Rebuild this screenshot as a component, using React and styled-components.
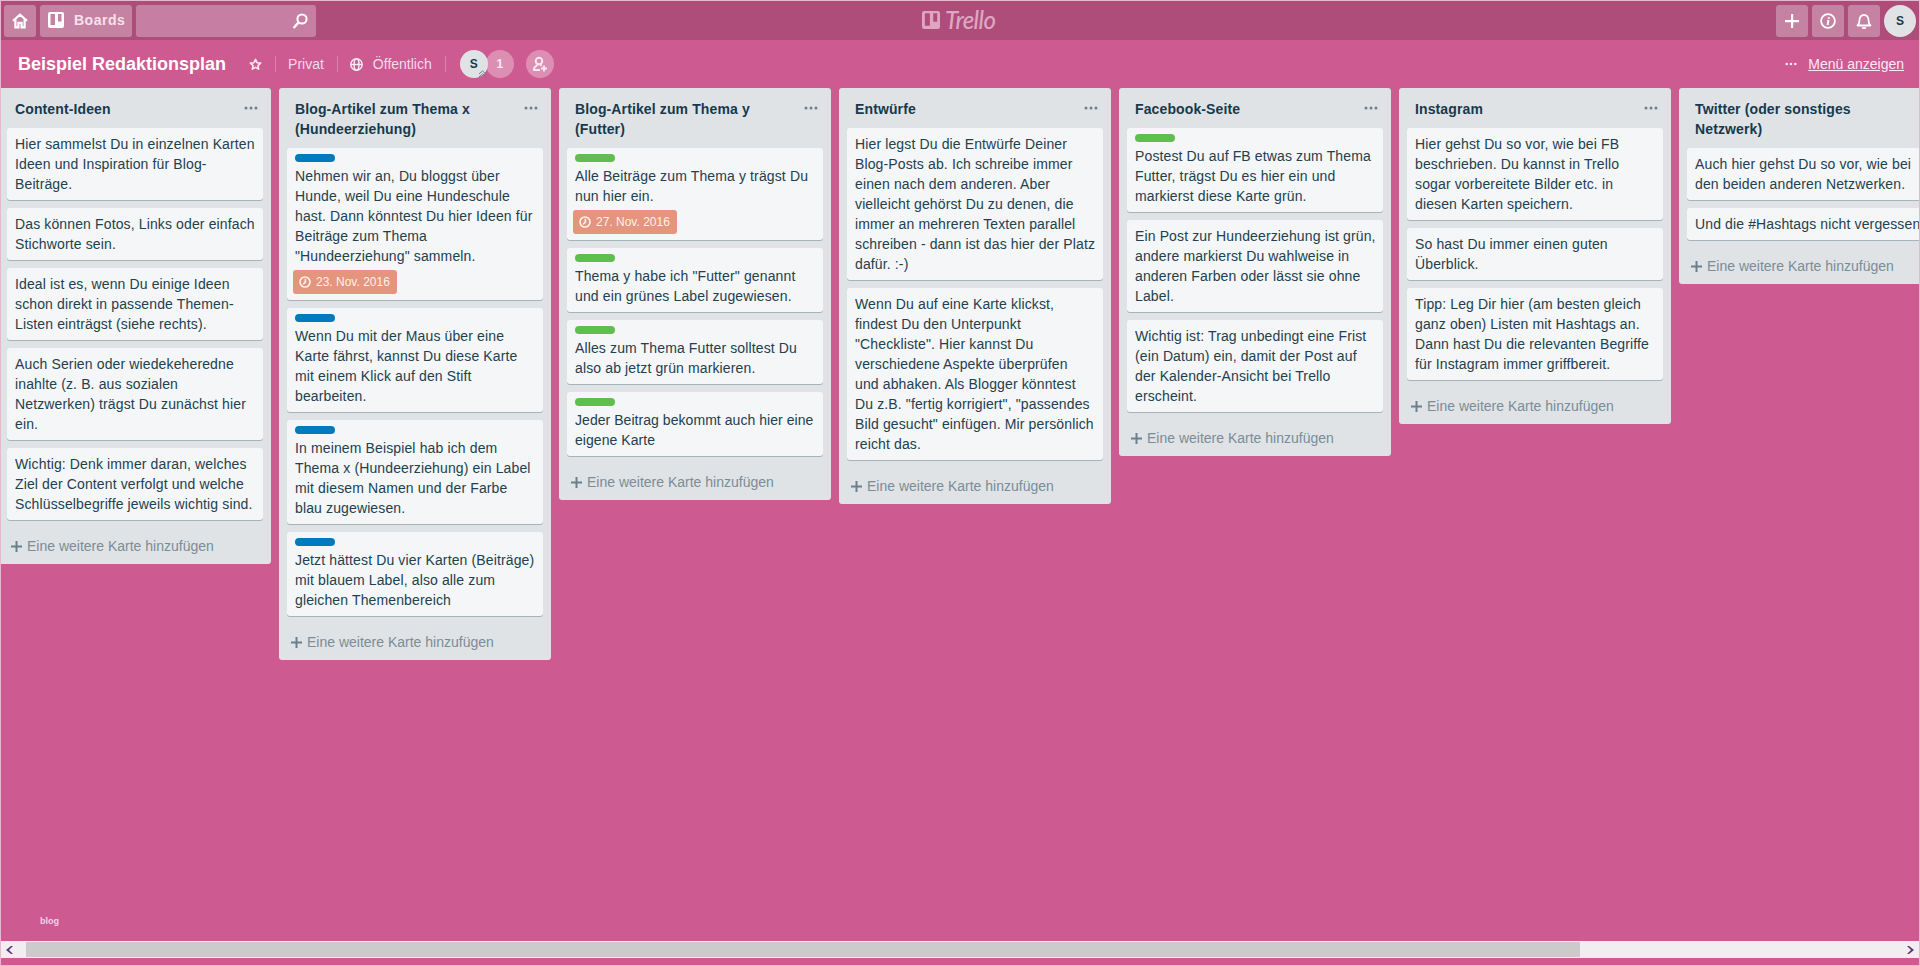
import React from 'react'
import styled, { createGlobalStyle } from 'styled-components'

const Global = createGlobalStyle`
  html, body { margin: 0; padding: 0; height: 100%; overflow: hidden; }
  body { font-family: "Liberation Sans", Arial, sans-serif; font-size: 14px; line-height: 20px; color: #17394d; }
`

const Frame = styled.div`
  box-sizing: border-box;
  width: 1920px;
  height: 966px;
  border: 1px solid #e6b9cf;
  background: #cd5a91;
  display: flex;
  flex-direction: column;
  overflow: hidden;
`

const TopBar = styled.header`
  box-sizing: border-box;
  height: 39px;
  flex: none;
  margin: 0 -1px;
  padding: 3px 4px 3px;
  background: #ae4d7a;
  display: flex;
  align-items: center;
  gap: 4px;
  position: relative;
`

const BarButton = styled.div`
  box-sizing: border-box;
  width: ${props => props.width || 32}px;
  height: 32px;
  flex: none;
  border-radius: 3px;
  background: rgba(255, 255, 255, 0.3);
  color: #fff;
  display: flex;
  align-items: center;
  justify-content: ${props => props.left ? 'flex-start' : 'center'};
  padding-left: ${props => props.left ? 8 : 0}px;
  padding-bottom: ${props => props.left ? 1 : 0}px;
  gap: 10px;
  font-weight: 700;
  font-size: 14px;
`

const BoardsLabel = styled.span`
  color: #f6e3ec;
  letter-spacing: 0.5px;
`

const SearchBox = styled(BarButton)`
  width: 180px;
  justify-content: flex-end;
  padding-right: 8px;
  background: #c67fa3;
`

const Logo = styled.div`
  position: absolute;
  left: 922px;
  top: 3px;
  height: 32px;
  display: flex;
  align-items: center;
  gap: 5px;
  color: #dfa6c4;
`

const LogoText = styled.span`
  font-family: Lato, sans-serif;
  font-style: italic;
  font-weight: 500;
  font-size: 24px;
  letter-spacing: -0.6px;
`

const Spacer = styled.div`
  flex: 1;
`

const TopAvatar = styled.div`
  width: 32px;
  height: 32px;
  flex: none;
  border-radius: 50%;
  background: #dfe3e6;
  color: #17394d;
  font-size: 12px;
  font-weight: 700;
  display: flex;
  align-items: center;
  justify-content: center;
`

const BoardBar = styled.div`
  box-sizing: border-box;
  height: 48px;
  flex: none;
  padding-left: 17px;
  padding-right: 15px;
  display: flex;
  align-items: center;
  color: #fff;
`

const BoardTitle = styled.h1`
  margin: 0 23px 0 0;
  font-size: 18px;
  line-height: 24px;
  font-weight: 700;
  color: #fff;
`

const BarIcon = styled.span`
  display: flex;
  flex: none;
  color: #fbe9f1;
`

const Sep = styled.span`
  width: 1px;
  height: 16px;
  flex: none;
  margin: 0 ${props => props.after || 12}px 0 ${props => props.before || 13}px;
  background: rgba(255, 255, 255, 0.25);
`

const BarText = styled.span`
  color: #f5dbe7;
  font-size: 14px;
  margin-left: ${props => props.gap || 0}px;
`

const Members = styled.div`
  display: flex;
  align-items: center;
  margin-left: 2px;
`

const Avatar = styled(TopAvatar)`
  width: 28px;
  height: 28px;
  position: relative;
  z-index: 1;
`

const Chevrons = styled.svg`
  position: absolute;
  right: 1px;
  bottom: 0;
`

const Count = styled.div`
  width: 28px;
  height: 28px;
  margin-left: -2px;
  border-radius: 50%;
  background: #dc8fb3;
  color: #fbeaf2;
  font-size: 12px;
  font-weight: 700;
  display: flex;
  align-items: center;
  justify-content: center;
`

const AddMember = styled(Count)`
  margin-left: 12px;
`

const MenuLink = styled.a`
  margin-left: 11px;
  color: #fbe9f1;
  text-decoration: underline;
  font-size: 14px;
`

const Canvas = styled.div`
  flex: 1;
  min-height: 0;
  display: flex;
  flex-direction: column;
`

const Lists = styled.main`
  flex: 1;
  min-height: 0;
  display: flex;
  align-items: flex-start;
  gap: 8px;
  margin-left: -2px;
`

const List = styled.section`
  box-sizing: border-box;
  width: 272px;
  flex: none;
  background: #dfe3e6;
  border-radius: 3px;
  padding: 0 8px;
`

const ListHead = styled.div`
  position: relative;
  padding: 11px 32px 9px 8px;
`

const ListTitle = styled.h2`
  margin: 0;
  font-size: 14px;
  line-height: 20px;
  font-weight: 700;
  letter-spacing: 0.12px;
  color: #17394d;
`

const ListDots = styled.div`
  position: absolute;
  right: 5px;
  top: 18px;
  display: flex;
  color: #6b808c;
`

const Card = styled.article`
  background: #f5f6f7;
  border-radius: 3px;
  box-shadow: 0 1px 0 #a9b3ba;
  padding: 6px 7px 6px 8px;
  margin-bottom: 8px;
  color: #22414f;
  letter-spacing: ${props => props.$spacing ?? 0.13}px;
`

const Label = styled.div`
  width: 40px;
  height: 8px;
  border-radius: 4px;
  margin-bottom: 4px;
  background: ${props => props.color};
`

const Due = styled.div`
  box-sizing: border-box;
  width: ${props => props.width || 104}px;
  height: 24px;
  margin: 4px 0 0 -2px;
  padding-left: 6px;
  border-radius: 3px;
  background: #e5947d;
  color: #fdf1ec;
  font-size: 12px;
  letter-spacing: 0;
  display: flex;
  align-items: center;
  gap: 5px;
`

const Composer = styled.div`
  height: 36px;
  margin: 0 -8px;
  padding-left: 12px;
  display: flex;
  align-items: center;
  gap: 5px;
  color: #7a8c97;
  font-size: 14px;
`

const PlusMark = styled.svg`
  color: #6b808c;
`

const BlogRow = styled.div`
  flex: none;
  height: 25px;
  padding: 1px 0 0 39px;
  color: #f4d5e3;
  font-size: 9px;
  line-height: 10px;
  font-weight: 700;
`

const ScrollBar = styled.div`
  flex: none;
  height: 17px;
  margin-bottom: 7px;
  background: #f0eef0;
  display: flex;
  align-items: center;
`

const ScrollEnd = styled.div`
  width: ${props => props.width}px;
  flex: ${props => props.grow ? 1 : 'none'};
  height: 15px;
  display: flex;
  align-items: center;
  justify-content: ${props => props.grow ? 'flex-end' : 'flex-start'};
  padding: 0 4px;
  box-sizing: border-box;
  color: #5f3370;
`

const ScrollThumb = styled.div`
  width: 1554px;
  height: 15px;
  flex: none;
  background: #cbcbcb;
`

const HomeIcon = () => (
  <svg width="16" height="16" viewBox="0 0 16 16" fill="none" stroke="currentColor" strokeWidth="2.2">
    <path d="M1 7.800 8 1.600l7 6.200M3.400 6v8.400h3V9.800h3.200v4.600h3V6" />
  </svg>
)

const BoardsIcon = ({ size = 16 }) => (
  <svg width={size} height={size} viewBox="0 0 16 16">
    <path fill="currentColor" fillRule="evenodd" d="M2 0h12a2 2 0 0 1 2 2v12a2 2 0 0 1-2 2H2a2 2 0 0 1-2-2V2a2 2 0 0 1 2-2zm.5 2v11h4.500V2zm7.500 0v7.500h3.500V2z" />
  </svg>
)

const SearchIcon = () => (
  <svg width="16" height="16" viewBox="0 0 16 16" fill="none" stroke="currentColor" strokeWidth="2">
    <circle cx="10" cy="6" r="4.600" />
    <path d="M6.600 9.400 1.600 15" strokeWidth="2.400" />
  </svg>
)

const PlusIcon = () => (
  <svg width="18" height="18" viewBox="0 0 18 18" fill="currentColor">
    <path d="M8 2h2.200v6H16v2.200h-5.800V16H8v-5.800H2V8h6z" />
  </svg>
)

const InfoIcon = () => (
  <svg width="16" height="16" viewBox="0 0 16 16" fill="none" stroke="currentColor" strokeWidth="1.800">
    <circle cx="8" cy="8" r="6.900" />
    <path d="M8.800 4.200v1.600M8.400 7 7.600 12" strokeWidth="2" />
  </svg>
)

const BellIcon = () => (
  <svg width="16" height="16" viewBox="0 0 16 16" fill="none" stroke="currentColor" strokeWidth="1.800">
    <path d="M1.500 12.500c1.600-1.400 2-2.800 2-5.500C3.500 4 5.400 2 8 2s4.500 2 4.500 5c0 2.700.4 4.100 2 5.500z" strokeLinejoin="round" />
    <path d="M6.200 14.400c.5 1 3.100 1 3.600 0" />
  </svg>
)

const StarIcon = () => (
  <svg width="13" height="13" viewBox="0 0 16 16" fill="none" stroke="currentColor" strokeWidth="2" strokeLinejoin="round">
    <path d="m8 1.800 1.900 4 4.400.5-3.300 3 .9 4.400L8 11.500l-3.900 2.200.9-4.400-3.300-3 4.400-.5z" />
  </svg>
)

const GlobeIcon = () => (
  <svg width="13" height="13" viewBox="0 0 16 16" fill="none" stroke="currentColor" strokeWidth="1.800">
    <circle cx="8" cy="8" r="7" />
    <ellipse cx="8" cy="8" rx="3" ry="7" />
    <path d="M1 8h14" />
  </svg>
)

const AddMemberIcon = () => (
  <svg width="16" height="16" viewBox="0 0 16 16" fill="none" stroke="currentColor" strokeWidth="1.900">
    <circle cx="7" cy="5" r="3.300" />
    <path d="M5.500 8.500C5 10 2 10.500 2 13v1h6M8.500 8.500l1 1.500" />
    <path d="M12 9.500v6M9 12.500h6" />
  </svg>
)

const ClockIcon = () => (
  <svg width="12" height="12" viewBox="0 0 16 16" fill="none" stroke="currentColor" strokeWidth="2.200">
    <circle cx="8" cy="8" r="6.700" />
    <path d="M8.500 3.800V8.300L5.500 11" />
  </svg>
)

const Dots = ({ width = 14 }) => (
  <svg width={width} height="4" viewBox="0 0 14 4" fill="currentColor">
    <circle cx="2" cy="2" r="1.500" />
    <circle cx="7" cy="2" r="1.500" />
    <circle cx="12" cy="2" r="1.500" />
  </svg>
)

const BLUE = '#0079bf'
const GREEN = '#61bd4f'

const LISTS = [
  {
    title: 'Content-Ideen',
    cards: [
      { text: 'Hier sammelst Du in einzelnen Karten Ideen und Inspiration für Blog-Beiträge.' },
      { text: 'Das können Fotos, Links oder einfach Stichworte sein.' },
      { text: 'Ideal ist es, wenn Du einige Ideen schon direkt in passende Themen-Listen einträgst (siehe rechts).' },
      { text: 'Auch Serien oder wiedekeheredne inahlte (z. B. aus sozialen Netzwerken) trägst Du zunächst hier ein.' },
      { text: 'Wichtig: Denk immer daran, welches Ziel der Content verfolgt und welche Schlüsselbegriffe jeweils wichtig sind.' },
    ],
  },
  {
    title: 'Blog-Artikel zum Thema x (Hundeerziehung)',
    cards: [
      { label: BLUE, text: 'Nehmen wir an, Du bloggst über Hunde, weil Du eine Hundeschule hast. Dann könntest Du hier Ideen für Beiträge zum Thema "Hundeerziehung" sammeln.', due: '23. Nov. 2016' },
      { label: BLUE, text: 'Wenn Du mit der Maus über eine Karte fährst, kannst Du diese Karte mit einem Klick auf den Stift bearbeiten.' },
      { label: BLUE, text: 'In meinem Beispiel hab ich dem Thema x (Hundeerziehung) ein Label mit diesem Namen und der Farbe blau zugewiesen.' },
      { label: BLUE, text: 'Jetzt hättest Du vier Karten (Beiträge) mit blauem Label, also alle zum gleichen Themenbereich' },
    ],
  },
  {
    title: 'Blog-Artikel zum Thema y (Futter)',
    cards: [
      { label: GREEN, text: 'Alle Beiträge zum Thema y trägst Du nun hier ein.', due: '27. Nov. 2016' },
      { label: GREEN, text: 'Thema y habe ich "Futter" genannt und ein grünes Label zugewiesen.' },
      { label: GREEN, text: 'Alles zum Thema Futter solltest Du also ab jetzt grün markieren.' },
      { label: GREEN, spacing: 0.05, text: 'Jeder Beitrag bekommt auch hier eine eigene Karte' },
    ],
  },
  {
    title: 'Entwürfe',
    cards: [
      { text: 'Hier legst Du die Entwürfe Deiner Blog-Posts ab. Ich schreibe immer einen nach dem anderen. Aber vielleicht gehörst Du zu denen, die immer an mehreren Texten parallel schreiben - dann ist das hier der Platz dafür. :-)' },
      // nbsp keeps "und abhaken" together, the line breaks there in the screenshot
      { text: 'Wenn Du auf eine Karte klickst, findest Du den Unterpunkt "Checkliste". Hier kannst Du verschiedene Aspekte überprüfen und\u00a0abhaken. Als Blogger könntest Du z.B. "fertig korrigiert", "passendes Bild gesucht" einfügen. Mir persönlich reicht das.' },
    ],
  },
  {
    title: 'Facebook-Seite',
    cards: [
      { label: GREEN, text: 'Postest Du auf FB etwas zum Thema Futter, trägst Du es hier ein und markierst diese Karte grün.' },
      { text: 'Ein Post zur Hundeerziehung ist grün, andere markierst Du wahlweise in anderen Farben oder lässt sie ohne Label.' },
      { text: 'Wichtig ist: Trag unbedingt eine Frist (ein Datum) ein, damit der Post auf der Kalender-Ansicht bei Trello erscheint.' },
    ],
  },
  {
    title: 'Instagram',
    cards: [
      { text: 'Hier gehst Du so vor, wie bei FB beschrieben. Du kannst in Trello sogar vorbereitete Bilder etc. in diesen Karten speichern.' },
      { text: 'So hast Du immer einen guten Überblick.' },
      { text: 'Tipp: Leg Dir hier (am besten gleich ganz oben) Listen mit Hashtags an. Dann hast Du die relevanten Begriffe für Instagram immer griffbereit.' },
    ],
  },
  {
    title: 'Twitter (oder sonstiges Netzwerk)',
    cards: [
      { text: 'Auch hier gehst Du so vor, wie bei den beiden anderen Netzwerken.' },
      { text: 'Und die #Hashtags nicht vergessen' },
    ],
  },
]

export default function App() {
  return (
    <Frame>
      <Global />
      <TopBar>
        <BarButton><HomeIcon /></BarButton>
        <BarButton width={92} left><BoardsIcon /><BoardsLabel>Boards</BoardsLabel></BarButton>
        <SearchBox><SearchIcon /></SearchBox>
        <Logo>
          <BoardsIcon size={18} />
          <LogoText>Trello</LogoText>
        </Logo>
        <Spacer />
        <BarButton><PlusIcon /></BarButton>
        <BarButton><InfoIcon /></BarButton>
        <BarButton><BellIcon /></BarButton>
        <TopAvatar>S</TopAvatar>
      </TopBar>

      <BoardBar>
        <BoardTitle>Beispiel Redaktionsplan</BoardTitle>
        <BarIcon><StarIcon /></BarIcon>
        <Sep />
        <BarText>Privat</BarText>
        <Sep />
        <BarIcon><GlobeIcon /></BarIcon>
        <BarText gap={10}>Öffentlich</BarText>
        <Sep />
        <Members>
          <Avatar>
            S
            <Chevrons width="9" height="8" viewBox="0 0 9 8" fill="none" stroke="#6b808c" strokeWidth="1">
              <path d="M1 4l3.500-3L8 4M1 7l3.500-3L8 7" />
            </Chevrons>
          </Avatar>
          <Count>1</Count>
          <AddMember><AddMemberIcon /></AddMember>
        </Members>
        <Spacer />
        <BarIcon><Dots width={12} /></BarIcon>
        <MenuLink>Menü anzeigen</MenuLink>
      </BoardBar>

      <Canvas>
        <Lists>
          {LISTS.map(list => (
            <List key={list.title}>
              <ListHead>
                <ListTitle>{list.title}</ListTitle>
                <ListDots><Dots /></ListDots>
              </ListHead>
              {list.cards.map(card => (
                <Card key={card.text} $spacing={card.spacing}>
                  {card.label && <Label color={card.label} />}
                  {card.text}
                  {card.due && <Due><ClockIcon />{card.due}</Due>}
                </Card>
              ))}
              <Composer>
                <PlusMark width="11" height="11" viewBox="0 0 11 11" fill="currentColor"><path d="M4.500 0h2v4.500H11v2H6.500V11h-2V6.500H0v-2h4.500z" /></PlusMark>
                Eine weitere Karte hinzufügen
              </Composer>
            </List>
          ))}
        </Lists>
        <BlogRow>blog</BlogRow>
      </Canvas>

      <ScrollBar>
        <ScrollEnd width={25}>
          <svg width="8" height="8" viewBox="0 0 8 8" fill="currentColor"><path d="M6 0h2L4 4l4 4H6L1 4z" /></svg>
        </ScrollEnd>
        <ScrollThumb />
        <ScrollEnd grow>
          <svg width="8" height="8" viewBox="0 0 8 8" fill="currentColor"><path d="M2 0H0l4 4-4 4h2l5-4z" /></svg>
        </ScrollEnd>
      </ScrollBar>
    </Frame>
  )
}
